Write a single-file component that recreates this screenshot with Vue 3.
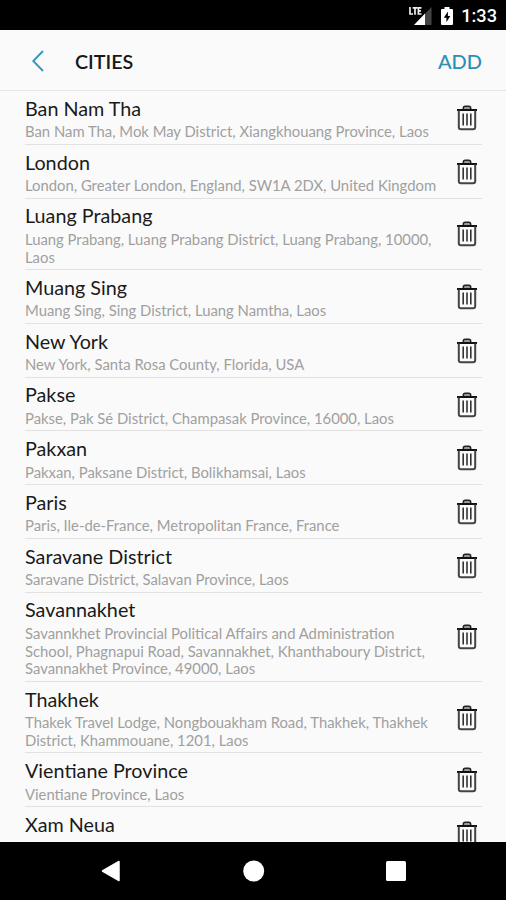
<script setup>
const cities = [
  { name: 'Ban Nam Tha', lines: ['Ban Nam Tha, Mok May District, Xiangkhouang Province, Laos'] },
  { name: 'London', lines: ['London, Greater London, England, SW1A 2DX, United Kingdom'] },
  { name: 'Luang Prabang', lines: ['Luang Prabang, Luang Prabang District, Luang Prabang, 10000,', 'Laos'] },
  { name: 'Muang Sing', lines: ['Muang Sing, Sing District, Luang Namtha, Laos'] },
  { name: 'New York', lines: ['New York, Santa Rosa County, Florida, USA'] },
  { name: 'Pakse', lines: ['Pakse, Pak Sé District, Champasak Province, 16000, Laos'] },
  { name: 'Pakxan', lines: ['Pakxan, Paksane District, Bolikhamsai, Laos'] },
  { name: 'Paris', lines: ['Paris, Ile-de-France, Metropolitan France, France'] },
  { name: 'Saravane District', lines: ['Saravane District, Salavan Province, Laos'] },
  { name: 'Savannakhet', lines: ['Savannkhet Provincial Political Affairs and Administration', 'School, Phagnapui Road, Savannakhet, Khanthaboury District,', 'Savannakhet Province, 49000, Laos'] },
  { name: 'Thakhek', lines: ['Thakek Travel Lodge, Nongbouakham Road, Thakhek, Thakhek', 'District, Khammouane, 1201, Laos'] },
  { name: 'Vientiane Province', lines: ['Vientiane Province, Laos'] },
  { name: 'Xam Neua', lines: [] },
]
</script>

<template>
  <div class="screen">
    <div class="status">
      <svg class="signal" width="24" height="20" viewBox="0 0 24 20">
        <path d="M22.5 1V19H5Z" fill="#444" />
        <path d="M16 7.5V19H5Z" fill="#fff" />
        <path d="M0 0H13V9.5H0Z" fill="#000" />
        <path d="M1 1V8H4M3.6 1.8H8.4M6 1.8V8.8M12.5 1.8H9.4V8H12.5M9.4 4.9H12" fill="none" stroke="#eee" stroke-width="1.7" />
      </svg>
      <svg class="battery" width="12" height="18" viewBox="0 0 12 18">
        <path d="M3.5 0H8.5V2H11Q12 2 12 3V17Q12 18 11 18H1Q0 18 0 17V3Q0 2 1 2H3.5Z" fill="#fff" />
        <path d="M6.9 4.5 2.8 10.8H5.4V15.3L9.3 9H6.9Z" fill="#000" />
      </svg>
      <span class="clock">1:33</span>
    </div>
    <header class="header">
      <svg class="back" width="14" height="24" viewBox="0 0 14 24">
        <path d="M12 2 2.3 12 12 22" fill="none" stroke="#3199bd" stroke-width="1.9" />
      </svg>
      <h1 class="title">CITIES</h1>
      <span class="add">ADD</span>
    </header>
    <main class="list">
      <div v-for="city in cities" :key="city.name" class="row" :class="{ partial: !city.lines.length }">
        <div class="text">
          <div class="name">{{ city.name }}</div>
          <div v-for="line in city.lines" :key="line" class="sub">{{ line }}</div>
        </div>
        <svg class="trash" width="22" height="26" viewBox="0 0 22 26">
          <path d="M7.3 4.5V3.3Q7.3 1.3 9.2 1.3H12.8Q14.7 1.3 14.7 3.3V4.5" fill="#999" stroke="#222" stroke-width="1.5" />
          <path d="M1 5H21" stroke="#111" stroke-width="2" />
          <path d="M2.8 5.5V22.3Q2.8 24.3 5 24.3H17Q19.2 24.3 19.2 22.3V5.5" fill="none" stroke="#444" stroke-width="2" />
          <path d="M7.2 8.5V20.5M11 8.5V20.5M14.8 8.5V20.5" stroke="#333" stroke-width="1.6" />
        </svg>
      </div>
    </main>
    <nav class="nav">
      <svg width="20" height="22" viewBox="0 0 20 22"><path d="M18 1.5V20.5L1.5 11Z" fill="#fff" stroke="#fff" stroke-width="1.5" stroke-linejoin="round" /></svg>
      <svg width="22" height="22" viewBox="0 0 22 22"><circle cx="10.7" cy="11" r="10.5" fill="#fff" /></svg>
      <svg width="20" height="20" viewBox="0 0 20 20"><rect width="20" height="20" rx="1.5" fill="#fff" /></svg>
    </nav>
  </div>
</template>

<style>
body { margin: 0; background: #fafafa; }
</style>

<style scoped>
.screen {
  width: 506px;
  height: 900px;
  display: flex;
  flex-direction: column;
  overflow: hidden;
  background: #fafafa;
  font-family: Lato, "Liberation Sans", sans-serif;
}
.status {
  flex: none;
  height: 30px;
  box-sizing: border-box;
  padding: 1px 9px 0 0;
  background: #000;
  display: flex;
  justify-content: flex-end;
  align-items: center;
}
.signal { margin-right: 8px; }
.battery { margin-right: 8px; }
.clock {
  font: 500 18.2px/30px Roboto, sans-serif;
  color: #fff;
}
.header {
  flex: none;
  height: 61px;
  box-sizing: border-box;
  border-bottom: 1px solid #e6e6e6;
  padding: 2px 24px 0 31px;
  display: flex;
  align-items: center;
}
.title {
  margin: 0 0 0 30px;
  font-size: 19.7px;
  font-weight: 600;
  color: #181818;
}
.add {
  margin-left: auto;
  font-size: 20px;
  font-weight: 500;
  color: #2b8fb3;
}
.list {
  flex: 1;
  min-height: 0;
  overflow: hidden;
}
.row {
  margin: 0 24px 0 25px;
  border-bottom: 1px solid #e2e2e2;
  padding: 3.9px 4px 2.7px 0;
  display: flex;
  justify-content: space-between;
  align-items: center;
}
.partial { height: 46.7px; align-items: flex-start; }
.partial .trash { margin-top: 10px; }
.name {
  font-size: 19.75px;
  line-height: 27.3px;
  margin-bottom: 1.2px;
  color: #1a1a1a;
  white-space: nowrap;
}
.sub {
  font-size: 14.83px;
  line-height: 17.7px;
  color: #a0a0a0;
  white-space: nowrap;
}
.text { width: 412px; }
.trash { flex: none; }
.nav {
  flex: none;
  height: 58px;
  padding: 0 100px 0 101px;
  background: #000;
  display: flex;
  justify-content: space-between;
  align-items: center;
}
</style>
